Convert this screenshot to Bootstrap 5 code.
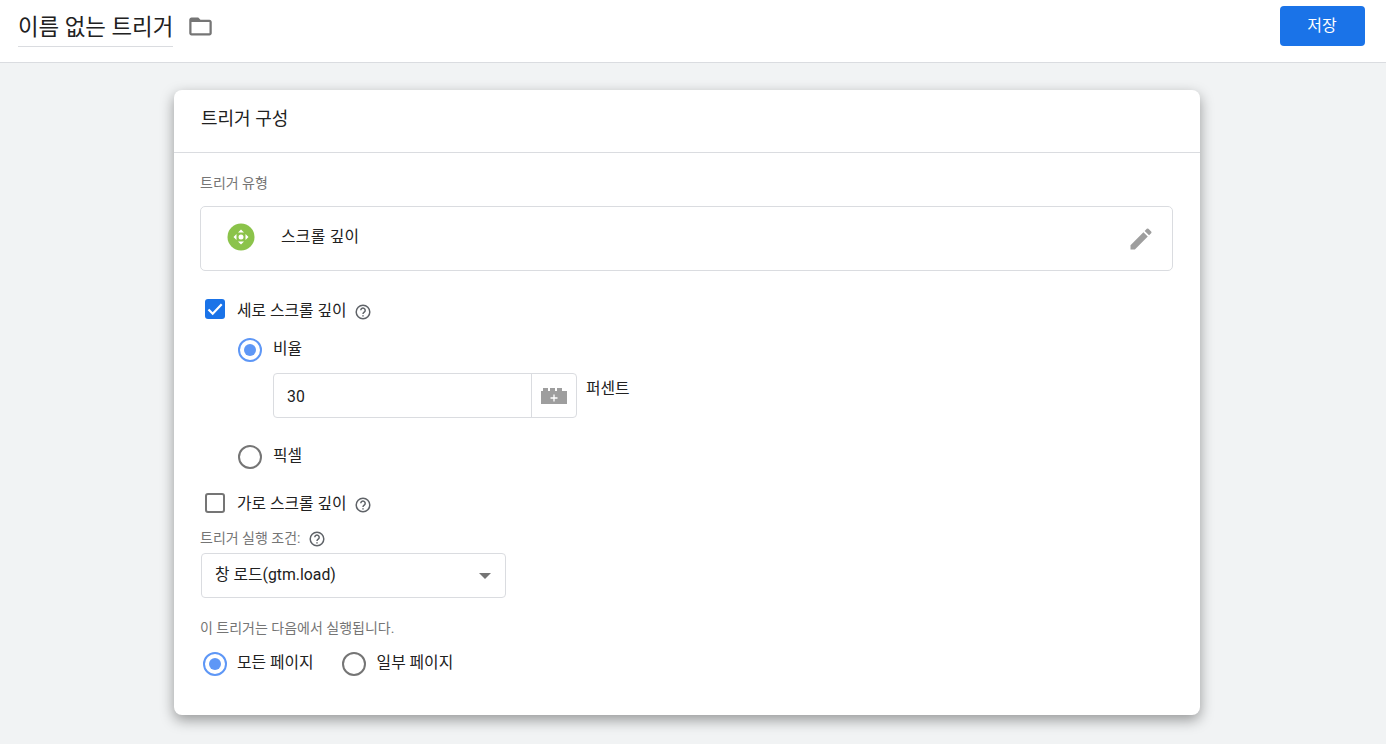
<!DOCTYPE html>
<html lang="ko">
<head>
<meta charset="utf-8">
<title>이름 없는 트리거</title>
<link href="https://cdn.jsdelivr.net/npm/bootstrap@5.3.0/dist/css/bootstrap.min.css" rel="stylesheet">
<style>
html,body{height:744px;overflow:hidden}
body{background:#f1f3f4;font-family:Roboto,"Noto Sans CJK KR",sans-serif;color:#212121;font-size:15.8px;line-height:20px}
.top-bar{height:63px;background:#fff;border-bottom:1px solid #dadce0;padding:6px 21.500px 0 18px}
.name-text{font-size:22.4px;line-height:30px;height:41px;padding-top:6px;border-bottom:1px solid #dadce0;color:#212121}
.folder-ico{margin:7px 0 0 14px;width:27px;height:27px;display:block}
.save-btn{width:85px;height:40px;background:#1a73e8;color:#fff;border:0;border-radius:4px;font-size:16px;padding:0}
.cfg-card{width:1026px;height:625px;margin:27px 0 0 174px;background:#fff;border-radius:8px;box-shadow:0 5px 14px rgba(0,0,0,.38);overflow:hidden}
.cfg-head{height:63px;border-bottom:1px solid #dadce0;padding:18px 27px 0;font-size:18px;line-height:22px}
.cfg-body{padding:20px 27px 0 26px}
.cap{font-size:14px;line-height:20px;color:#757575}
.type-box{height:65px;margin-top:13px;border:1px solid #dadce0;border-radius:5px;padding:0 17px 0 26px}
.type-ico{width:28px;height:28px;display:block;margin-top:-4px}
.type-name{margin:-4px 0 0 26px;letter-spacing:.3px}
.pen{width:28px;height:28px;display:block}
.chk-row{height:24px}
.chk-row1{margin-top:28px}
.chk-row2{margin-top:23px}
.chk{width:20px;height:20px;border-radius:3px;margin:-2px 0 0 5px;flex:none}
.chk-row1 .chk{margin-top:-4px}
.chk-on{background:#1a73e8}
.chk-off{border:2px solid #757575}
.hlp{width:16px;height:16px;display:block;flex:none;margin-top:1px}
.rad{width:24px;height:24px;border-radius:50%;border:2px solid #757575;flex:none}
.rad-on{border-color:#5e97f6;padding:4px}
.rad-on::after{content:"";display:block;width:12px;height:12px;border-radius:50%;background:#5e97f6}
.rad-row1{margin:15px 0 0 38px;height:24px}
.rad-row2{margin:27px 0 0 38px;height:24px}
.rad-lbl{margin:-3px 0 0 3px}
.field-row{margin-top:11px}
.field-wrap{width:304px;height:45px;border:1px solid #dadce0;border-radius:4px;margin-left:73px}
.field-val{padding-left:13px;line-height:45px}
.var-btn{width:45px;border-left:1px solid #dadce0}
.unit-lbl{margin:6px 0 0 9px}
.fire-cap{margin-top:12px;height:20px}
.sel-box{width:305px;height:45px;border:1px solid #dadce0;border-radius:4px;padding:0 14px 2px 13px;margin:5px 0 0 1px}
.caret-dn{width:0;height:0;border-left:6.500px solid transparent;border-right:6.500px solid transparent;border-top:6px solid #757575;margin-top:3px}
.where-cap{margin-top:20px}
.page-row{margin:14px 0 0 3px;height:24px}
.rad-lbl2{margin:-3px 0 0 10px}
.page-rad2{margin-left:28px}
.page-rad2 + .rad-lbl2{margin-left:11px}
</style>
</head>
<body>
<header class="top-bar d-flex align-items-start">
  <div class="name-text">이름 없는 트리거</div>
  <svg class="folder-ico" viewBox="0 0 24 24" fill="#757575"><path d="M20 6h-8l-2-2H4c-1.100 0-2 .9-2 2v12c0 1.100.9 2 2 2h16c1.100 0 2-.9 2-2V8c0-1.100-.9-2-2-2zm0 12H4V8h16v10z"/></svg>
  <button class="save-btn ms-auto" type="button">저장</button>
</header>
<main class="cfg-card">
  <div class="cfg-head">트리거 구성</div>
  <div class="cfg-body">
    <div class="cap">트리거 유형</div>
    <div class="type-box d-flex align-items-center">
      <svg class="type-ico" viewBox="0 0 28 28"><circle cx="14" cy="14" r="13.500" fill="#8bc34a"/><circle cx="14" cy="14" r="2.500" fill="#fff"/><path fill="#fff" d="M14 6.500l3 3h-6zM14 21.500l-3-3h6zM6.500 14l3-3v6zM21.500 14l-3 3v-6z"/></svg>
      <div class="type-name">스크롤 깊이</div>
      <svg class="pen ms-auto" viewBox="0 0 24 24" fill="#9e9e9e"><path d="M3 17.250V21h3.750L17.810 9.940l-3.750-3.750L3 17.250zM20.710 7.040a1 1 0 0 0 0-1.410l-2.340-2.340a1 1 0 0 0-1.410 0l-1.830 1.830 3.750 3.750 1.830-1.830z"/></svg>
    </div>
    <div class="chk-row chk-row1 d-flex align-items-center">
      <div class="chk chk-on d-flex"><svg viewBox="0 0 20 20" fill="none" stroke="#fff" stroke-width="2.200"><path d="M3.500 10.500l4.200 4.200 9-9.500"/></svg></div>
      <span class="ms-2 ps-1">세로 스크롤 깊이</span>
      <svg class="hlp ms-2" viewBox="0 0 16 16" fill="none" stroke="#5f6368" stroke-width="1.500"><circle cx="8" cy="8" r="6.800"/><path d="M5.800 6.300a2.200 2.200 0 1 1 3.500 1.800c-.8.600-1.300.9-1.300 1.900"/><path d="M8 11.200v1.300"/></svg>
    </div>
    <div class="d-flex align-items-center gap-2 rad-row1">
      <div class="rad rad-on"></div><span class="rad-lbl">비율</span>
    </div>
    <div class="d-flex align-items-start field-row">
      <div class="field-wrap d-flex">
        <div class="field-val flex-grow-1">30</div>
        <div class="var-btn d-flex align-items-center justify-content-center">
          <svg width="26" height="17" viewBox="0 0 26 17" fill="#9e9e9e"><path d="M0 4h2V1h5v3h2V1h5v3h2V1h5v3h5v13H0z"/><path stroke="#fff" stroke-width="1.300" d="M13 7.500v7M9.500 11h7"/></svg>
        </div>
      </div>
      <span class="unit-lbl">퍼센트</span>
    </div>
    <div class="d-flex align-items-center gap-2 rad-row2">
      <div class="rad"></div><span class="rad-lbl">픽셀</span>
    </div>
    <div class="chk-row chk-row2 d-flex align-items-center">
      <div class="chk chk-off"></div>
      <span class="ms-2 ps-1">가로 스크롤 깊이</span>
      <svg class="hlp ms-2" viewBox="0 0 16 16" fill="none" stroke="#5f6368" stroke-width="1.500"><circle cx="8" cy="8" r="6.800"/><path d="M5.800 6.300a2.200 2.200 0 1 1 3.500 1.800c-.8.600-1.300.9-1.300 1.900"/><path d="M8 11.200v1.300"/></svg>
    </div>
    <div class="cap d-flex align-items-center fire-cap">트리거 실행 조건:
      <svg class="hlp ms-2" viewBox="0 0 16 16" fill="none" stroke="#5f6368" stroke-width="1.500"><circle cx="8" cy="8" r="6.800"/><path d="M5.800 6.300a2.200 2.200 0 1 1 3.500 1.800c-.8.600-1.300.9-1.300 1.900"/><path d="M8 11.200v1.300"/></svg>
    </div>
    <div class="sel-box d-flex align-items-center justify-content-between">
      <span>창 로드(gtm.load)</span><span class="caret-dn"></span>
    </div>
    <div class="cap where-cap">이 트리거는 다음에서 실행됩니다.</div>
    <div class="d-flex align-items-center page-row">
      <div class="rad rad-on"></div><span class="rad-lbl2">모든 페이지</span>
      <div class="rad page-rad2"></div><span class="rad-lbl2">일부 페이지</span>
    </div>
  </div>
</main>
</body>
</html>
